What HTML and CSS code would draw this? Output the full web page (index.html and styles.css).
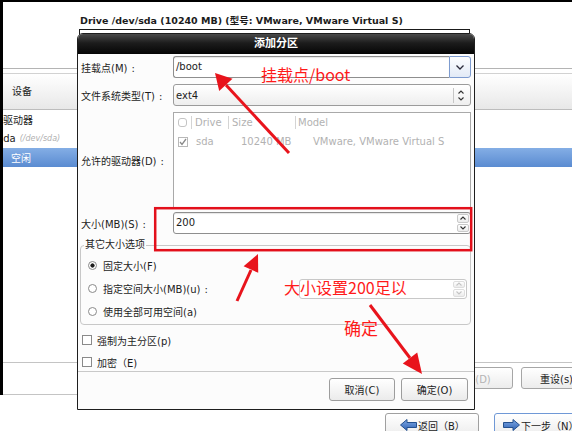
FILE: index.html
```html
<!DOCTYPE html>
<html lang="zh-CN">
<head>
<meta charset="utf-8">
<title>添加分区</title>
<link rel="stylesheet" href="styles.css">
</head>
<body>
<div class="screen">
  <div class="edge"></div>
  <div class="main">
    <div class="drive-label">Drive /dev/sda (10240 MB) (型号: VMware, VMware Virtual S)</div>
    <div class="drive-box"></div>
    <div class="tree">
      <div class="tree-head">设备</div>
      <div class="tree-row"><span class="hd">硬盘驱动器</span></div>
      <div class="tree-row"><span class="sda">sda</span><span class="dev">(/dev/sda)</span></div>
      <div class="tree-row selected"><span>空闲</span></div>
    </div>
    <div class="bg-actions">
      <div class="bg-btn disabled">删除(D)</div>
      <div class="bg-btn reset">重设(s)</div>
    </div>
    <div class="sep-line"></div>
    <div class="nav">
      <div class="nav-btn back">
        <svg class="nav-ico" width="17" height="12" viewBox="0 0 17 12"><defs><linearGradient id="ga" x1="0" y1="0" x2="0" y2="1"><stop offset="0" stop-color="#7fa9e4"/><stop offset="1" stop-color="#2f62b4"/></linearGradient></defs><polygon points="0.5,6 7,0.5 7,3.5 16.5,3.5 16.5,8.5 7,8.5 7,11.5" fill="url(#ga)" stroke="#24508f" stroke-width="1"/></svg>
        <span>返回（B）</span>
      </div>
      <div class="nav-btn next">
        <svg class="nav-ico" width="17" height="12" viewBox="0 0 17 12"><defs><linearGradient id="gb" x1="0" y1="0" x2="0" y2="1"><stop offset="0" stop-color="#7fa9e4"/><stop offset="1" stop-color="#2f62b4"/></linearGradient></defs><polygon points="16.5,6 10,0.5 10,3.5 0.5,3.5 0.5,8.5 10,8.5 10,11.5" fill="url(#gb)" stroke="#24508f" stroke-width="1"/></svg>
        <span>下一步（N）</span>
      </div>
    </div>
  </div>

  <div class="dialog">
    <div class="titlebar">添加分区</div>
    <div class="dlg-body">
      <div class="frow r1">
        <span class="lbl">挂载点(M)<span class="colon">:</span></span>
        <div class="combo-entry">
          <span class="entry">/boot</span>
          <span class="drop-btn"><svg width="8" height="5" viewBox="0 0 8 5"><polyline points="0.5,0.5 4,4 7.5,0.5" fill="none" stroke="#2b2b3a" stroke-width="1.3"/></svg></span>
        </div>
      </div>
      <div class="frow r2">
        <span class="lbl">文件系统类型(T)<span class="colon">:</span></span>
        <div class="combo-btn">
          <span class="val">ext4</span>
          <span class="combo-sep"></span>
          <svg class="updown" width="6" height="11" viewBox="0 0 6 11"><polyline points="0.5,3.5 3,1 5.5,3.5" fill="none" stroke="#333" stroke-width="1.1"/><polyline points="0.5,7.5 3,10 5.5,7.5" fill="none" stroke="#333" stroke-width="1.1"/></svg>
        </div>
      </div>
      <div class="frow r3">
        <span class="lbl">允许的驱动器(D)<span class="colon">:</span></span>
        <div class="drive-list">
          <div class="list-head">
            <span class="c0"><i class="hdr-check"></i></span>
            <span>Drive</span>
            <span>Size</span>
            <span class="last">Model</span>
          </div>
          <div class="list-row">
            <span class="c0"><svg width="10" height="10" viewBox="0 0 10 10"><rect x="0.5" y="0.5" width="9" height="9" fill="#fff" stroke="#b8b8b8"/><polyline points="2,5 4,7.5 8,2" fill="none" stroke="#8a8a8a" stroke-width="1.3"/></svg></span>
            <span>sda</span>
            <span>10240 MB</span>
            <span>VMware, VMware Virtual S</span>
          </div>
        </div>
      </div>
      <div class="frow r4">
        <span class="lbl">大小(MB)(S)<span class="colon">:</span></span>
        <div class="spin">
          <span class="val">200</span>
          <span class="spin-btns">
            <span><svg width="6" height="4" viewBox="0 0 6 4"><polyline points="0.5,3.5 3,1 5.5,3.5" fill="none" stroke="#333" stroke-width="1.1"/></svg></span>
            <span><svg width="6" height="4" viewBox="0 0 6 4"><polyline points="0.5,0.5 3,3 5.5,0.5" fill="none" stroke="#333" stroke-width="1.1"/></svg></span>
          </span>
        </div>
      </div>

      <fieldset class="opts">
        <legend>其它大小选项</legend>
        <div class="opt"><i class="radio on"></i><span>固定大小(F)</span></div>
        <div class="opt"><i class="radio"></i><span>指定空间大小(MB)(u)<span class="colon">:</span></span>
          <div class="spin small disabled">
            <span class="val"></span>
            <span class="spin-btns">
              <span><svg width="6" height="4" viewBox="0 0 6 4"><polyline points="0.5,3.5 3,1 5.5,3.5" fill="none" stroke="#c4c4c4" stroke-width="1.1"/></svg></span>
              <span><svg width="6" height="4" viewBox="0 0 6 4"><polyline points="0.5,0.5 3,3 5.5,0.5" fill="none" stroke="#c4c4c4" stroke-width="1.1"/></svg></span>
            </span>
          </div>
        </div>
        <div class="opt"><i class="radio"></i><span>使用全部可用空间(a)</span></div>
      </fieldset>

      <div class="check-row first"><i class="check"></i><span>强制为主分区(p)</span></div>
      <div class="check-row"><i class="check"></i><span>加密<span class="wparen">（</span>E)</span></div>
      <div class="dlg-sep"></div>
      <div class="dlg-buttons">
        <div class="dbtn cancel">取消(C)</div>
        <div class="dbtn ok">确定(O)</div>
      </div>
    </div>
  </div>

  <svg class="marks" width="572" height="431" viewBox="0 0 572 431">
    <rect x="155.2" y="208.2" width="316" height="42" fill="none" stroke="#e3101b" stroke-width="2.5"/>
    <g stroke="#e8141c" stroke-width="3">
      <line x1="289" y1="153" x2="226" y2="85"/>
      <line x1="237" y1="301" x2="251" y2="270"/>
      <line x1="370" y1="305" x2="410" y2="358"/>
    </g>
    <g fill="#e8141c">
      <polygon points="215,73 232.5,78.7 219.2,90.9"/>
      <polygon points="258,254 258.2,272.8 243.6,266.2"/>
      <polygon points="422,374 402.8,363.4 417.2,352.6"/>
    </g>
  </svg>
  <div class="note note-boot">挂载点/boot</div>
  <div class="note note-size">大小设置200足以</div>
  <div class="note note-ok">确定</div>
</div>
</body>
</html>
```

FILE: styles.css
```css
* { box-sizing: border-box; }
html, body { margin: 0; padding: 0; }
body {
  width: 572px;
  height: 431px;
  overflow: hidden;
  background: #fff;
  font-family: "DejaVu Sans", "Noto Sans CJK SC", sans-serif;
  font-size: 10px;
  color: #1c1c1c;
}
.colon { margin-left: 4px; }
.wparen { font-family: "Noto Sans CJK TC", "Noto Sans CJK SC", sans-serif; }
.screen {
  position: relative;
  width: 572px;
  height: 431px;
  overflow: hidden;
  display: flex;
  align-items: flex-start;
  background: linear-gradient(#000 0, #000 2px, #fff 2px, #fff 100%);
}
.edge { flex: none; width: 3px; height: 395px; background: #000; }
.main {
  flex: 1;
  min-width: 0;
  height: 431px;
  padding-top: 2px;
  display: flex;
  flex-direction: column;
  overflow: hidden;
}
.drive-label {
  flex: none;
  margin: 12px 0 0 77px;
  height: 14px;
  line-height: 14px;
  font-weight: bold;
  font-size: 9.5px;
  white-space: nowrap;
}
.drive-box {
  flex: none;
  margin: 1px 0 0 76px;
  width: 391px;
  height: 33px;
  border: 1px solid #1a1a1a;
}
.tree {
  flex: none;
  margin-top: 6px;
  height: 295px;
  padding-top: 4px;
  border-top: 1px solid #b4b4b4;
  border-bottom: 1px solid #c4c4c4;
}
.tree-head {
  height: 37px;
  line-height: 36px;
  padding-left: 9px;
  border-top: 1px solid #d2d2d2;
  border-bottom: 1px solid #bdbdbd;
  background: linear-gradient(#ffffff, #e8e8e8);
}
.tree-row {
  height: 19px;
  display: flex;
  align-items: center;
  white-space: nowrap;
}
.tree-row .hd { margin-left: -20px; }
.tree-row .sda { margin-left: -5px; }
.tree-row .dev { margin-left: 4px; font-size: 8px; font-style: italic; color: #b0b0b0; }
.tree-row.selected {
  padding-left: 8px;
  color: #fff;
  background: linear-gradient(#84aee5, #5a8bd1);
}
.bg-actions {
  flex: none;
  margin: 4px -20px 0 0;
  height: 22px;
  display: flex;
  justify-content: flex-end;
  gap: 8px;
}
.bg-btn {
  width: 70px;
  height: 22px;
  border: 1px solid #a6a6a6;
  border-radius: 3px;
  background: linear-gradient(#ffffff, #ececec);
  display: flex;
  align-items: center;
  justify-content: center;
}
.bg-btn.disabled { color: #b4b4b4; padding-right: 10px; }
.bg-btn.reset { width: 71px; }
.sep-line { flex: none; margin-top: 5px; width: 300px; border-top: 1px solid #c4c4c4; }
.nav {
  flex: none;
  margin: 18px -20px 0 0;
  display: flex;
  justify-content: flex-end;
  gap: 15px;
}
.nav-btn {
  height: 24px;
  border: 1px solid #a0a0a0;
  border-radius: 3px;
  background: linear-gradient(#ffffff, #ececec);
  display: flex;
  align-items: center;
  gap: 1px;
  white-space: nowrap;
}
.nav-btn.back { width: 94px; padding-left: 14px; }
.nav-btn.next { width: 98px; padding-left: 8px; border-color: #6f98d6; }
.nav-ico { flex: none; }

/* dialog */
.dialog {
  position: absolute;
  left: 77px;
  top: 33px;
  width: 398px;
  height: 377px;
  border: 1px solid #1e1e1e;
  border-radius: 6px 6px 0 0;
  background: #fcfcfc;
  overflow: hidden;
}
.titlebar {
  height: 20px;
  line-height: 20px;
  text-align: center;
  color: #fff;
  font-weight: bold;
  font-size: 11px;
  background: linear-gradient(#4a4a4a, #1c1c1c 45%, #050505);
}
.dlg-body { padding: 0 3px; }
.frow { display: flex; align-items: center; }
.frow.r1 { margin-top: 2px; height: 22px; }
.frow.r2 { margin-top: 6px; height: 22px; }
.frow.r3 { margin-top: 6px; height: 96px; }
.frow.r4 { margin-top: 4px; height: 22px; }
.lbl { flex: none; width: 92px; white-space: nowrap; }

.combo-entry { flex: 1; height: 22px; display: flex; }
.entry {
  flex: 1;
  padding-left: 2px;
  line-height: 20px;
  background: #fff;
  border: 1px solid #8e8e8e;
  border-right: none;
  border-radius: 3px 0 0 3px;
  box-shadow: inset 0 1px 1px rgba(0, 0, 0, 0.1);
}
.drop-btn {
  flex: none;
  width: 22px;
  border: 1px solid #7d9bcf;
  border-radius: 0 3px 3px 0;
  background: linear-gradient(#fdfeff, #e2eaf6);
  display: flex;
  align-items: center;
  justify-content: center;
}
.combo-btn {
  flex: 1;
  height: 22px;
  padding-left: 2px;
  border: 1px solid #9b9b9b;
  border-radius: 3px;
  background: linear-gradient(#ffffff, #eeeeee);
  display: flex;
  align-items: center;
}
.combo-btn .val { flex: 1; }
.combo-sep { width: 1px; height: 15px; background: #c6c6c6; margin-right: 4px; }
.updown { flex: none; margin-right: 6px; }

.drive-list {
  flex: 1;
  height: 96px;
  border: 1px solid #a9a9a9;
  background: #fff;
  color: #b2b2b2;
}
.list-head {
  height: 19px;
  display: grid;
  grid-template-columns: 18px 37px 67px 1fr;
  align-items: center;
}
.list-head > span {
  height: 13px;
  line-height: 13px;
  padding-left: 3px;
  border-right: 1px solid #d4d4d4;
}
.list-head > span.c0 { padding-left: 4px; display: flex; align-items: center; }
.list-head > span.last { border-right: none; padding-left: 2px; }
.hdr-check { width: 9px; height: 9px; border: 1px solid #c4c4c4; border-radius: 3px; }
.list-row {
  height: 19px;
  display: grid;
  grid-template-columns: 22px 45px 72px 1fr;
  align-items: center;
  white-space: nowrap;
}
.list-row .c0 { padding-left: 4px; display: flex; align-items: center; }

.spin {
  flex: 1;
  height: 22px;
  padding-left: 2px;
  border: 1px solid #8e8e8e;
  border-radius: 3px;
  background: #fff;
  display: flex;
  line-height: 20px;
  box-shadow: inset 0 1px 1px rgba(0, 0, 0, 0.1);
}
.spin .val { flex: 1; }
.spin-btns {
  flex: none;
  width: 12px;
  margin: 1px 1px 1px 0;
  display: flex;
  flex-direction: column;
  gap: 1px;
}
.spin-btns > span {
  flex: 1;
  border: 1px solid #c9c9c9;
  border-radius: 2px;
  background: linear-gradient(#ffffff, #ececec);
  display: flex;
  align-items: center;
  justify-content: center;
}
.spin.small {
  flex: none;
  width: 168px;
  height: 20px;
  margin-left: auto;
  border-color: #c8c8c8;
  box-shadow: none;
}
.spin.small .spin-btns > span { border-color: #dedede; }

.opts {
  margin: 5px 0 0 -1px;
  min-width: 0;
  padding: 3px 3px 1px 3px;
  border: 1px solid #c8c8c8;
  border-radius: 4px;
}
.opts legend {
  padding: 0 1px;
  line-height: 12px;
  height: 12px;
}
.opt {
  height: 23px;
  display: flex;
  align-items: center;
  white-space: nowrap;
}
.radio {
  flex: none;
  width: 9px;
  height: 9px;
  margin: 0 6px 0 4px;
  border: 1px solid #8a8a8a;
  border-radius: 50%;
  background: #fff;
}
.radio.on { background: radial-gradient(circle, #1e1e1e 0, #1e1e1e 1.8px, #fff 2.4px); }
.check-row {
  margin-top: 4px;
  height: 18px;
  display: flex;
  align-items: center;
  white-space: nowrap;
}
.check-row.first { margin-top: 6px; }
.check {
  flex: none;
  width: 10px;
  height: 10px;
  margin: 0 5px 0 1px;
  border: 1px solid #8a8a8a;
  background: #fff;
}
.dlg-sep { margin: 0 -3px; border-top: 1px solid #c9c9c9; }
.dlg-buttons {
  margin-top: 6px;
  padding-right: 3px;
  display: flex;
  justify-content: flex-end;
  gap: 6px;
}
.dbtn {
  height: 23px;
  border: 1px solid #9d9d9d;
  border-radius: 3px;
  background: linear-gradient(#ffffff, #ebebeb);
  display: flex;
  align-items: center;
  justify-content: center;
}
.dbtn.cancel { width: 66px; }
.dbtn.ok { width: 67px; }

/* annotations */
.marks { position: absolute; left: 0; top: 0; pointer-events: none; }
.note {
  position: absolute;
  color: #ff1a1a;
  font-family: "Noto Sans CJK SC", sans-serif;
  font-size: 16px;
  line-height: 16px;
  white-space: nowrap;
}
.note-boot { left: 261px; top: 66px; }
.note-size { left: 284px; top: 279px; }
.note-ok { left: 344px; top: 319px; font-size: 17px; line-height: 17px; }
```
